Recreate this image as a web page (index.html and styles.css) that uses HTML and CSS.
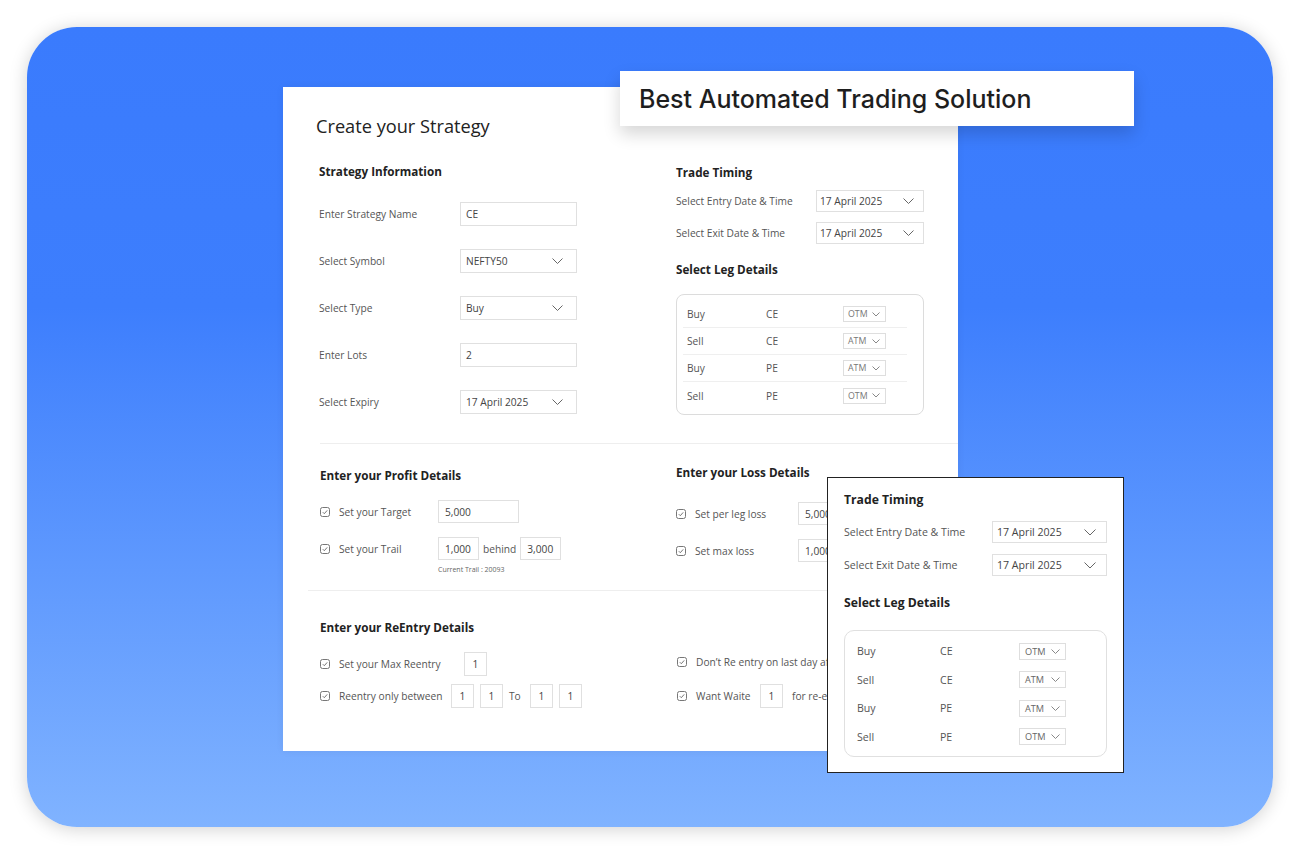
FILE: index.html
```html
<!DOCTYPE html>
<html>
<head>
<meta charset="utf-8">
<title>Create your Strategy</title>
<link rel="stylesheet" href="styles.css">
</head>
<body>
<div class="frame">
  <div class="card">
    <div class="title">Create your Strategy</div>

    <div class="top">
      <div class="col-left">
        <div class="heading">Strategy Information</div>
        <div class="frow first"><span class="flabel">Enter Strategy Name</span><span class="inp">CE</span></div>
        <div class="frow"><span class="flabel">Select Symbol</span><span class="inp sel">NEFTY50<svg class="chev" width="11" height="6" viewBox="0 0 11 6"><polyline points="0.5,0.5 5.5,5.5 10.5,0.5"/></svg></span></div>
        <div class="frow"><span class="flabel">Select Type</span><span class="inp sel">Buy<svg class="chev" width="11" height="6" viewBox="0 0 11 6"><polyline points="0.5,0.5 5.5,5.5 10.5,0.5"/></svg></span></div>
        <div class="frow"><span class="flabel">Enter Lots</span><span class="inp">2</span></div>
        <div class="frow"><span class="flabel">Select Expiry</span><span class="inp sel">17 April 2025<svg class="chev" width="11" height="6" viewBox="0 0 11 6"><polyline points="0.5,0.5 5.5,5.5 10.5,0.5"/></svg></span></div>
      </div>
      <div class="col-right">
        <div class="heading h-tt">Trade Timing</div>
        <div class="trow first"><span class="tlabel">Select Entry Date &amp; Time</span><span class="tinp">17 April 2025<svg class="chev" width="11" height="6" viewBox="0 0 11 6"><polyline points="0.5,0.5 5.5,5.5 10.5,0.5"/></svg></span></div>
        <div class="trow"><span class="tlabel">Select Exit Date &amp; Time</span><span class="tinp">17 April 2025<svg class="chev" width="11" height="6" viewBox="0 0 11 6"><polyline points="0.5,0.5 5.5,5.5 10.5,0.5"/></svg></span></div>
        <div class="heading h-leg">Select Leg Details</div>
        <div class="legbox">
          <div class="leg"><span class="c1">Buy</span><span class="c2">CE</span><span class="lsel">OTM<svg class="chev sm" width="8" height="5" viewBox="0 0 8 5"><polyline points="0.5,0.5 4,4 7.5,0.5"/></svg></span></div>
          <div class="leg"><span class="c1">Sell</span><span class="c2">CE</span><span class="lsel">ATM<svg class="chev sm" width="8" height="5" viewBox="0 0 8 5"><polyline points="0.5,0.5 4,4 7.5,0.5"/></svg></span></div>
          <div class="leg"><span class="c1">Buy</span><span class="c2">PE</span><span class="lsel">ATM<svg class="chev sm" width="8" height="5" viewBox="0 0 8 5"><polyline points="0.5,0.5 4,4 7.5,0.5"/></svg></span></div>
          <div class="leg"><span class="c1">Sell</span><span class="c2">PE</span><span class="lsel">OTM<svg class="chev sm" width="8" height="5" viewBox="0 0 8 5"><polyline points="0.5,0.5 4,4 7.5,0.5"/></svg></span></div>
        </div>
      </div>
    </div>

    <div class="divider d1"></div>

    <div class="mid">
      <div class="mcol-left">
        <div class="heading h-profit">Enter your Profit Details</div>
        <div class="crow r1"><svg class="cb" width="10" height="10" viewBox="0 0 10 10"><rect x="0.5" y="0.5" width="9" height="9" rx="2"/><polyline points="2.8,5.2 4.3,6.7 7.2,3.4"/></svg><span class="clabel w99">Set your Target</span><span class="box w81">5,000</span></div>
        <div class="crow r2"><svg class="cb" width="10" height="10" viewBox="0 0 10 10"><rect x="0.5" y="0.5" width="9" height="9" rx="2"/><polyline points="2.8,5.2 4.3,6.7 7.2,3.4"/></svg><span class="clabel w99">Set your Trail</span><span class="box w41">1,000</span><span class="behind">behind</span><span class="box w41">3,000</span></div>
        <div class="trail">Current Trail : 20093</div>
      </div>
      <div class="mcol-right">
        <div class="heading h-loss">Enter your Loss Details</div>
        <div class="crow l1"><svg class="cb" width="10" height="10" viewBox="0 0 10 10"><rect x="0.5" y="0.5" width="9" height="9" rx="2"/><polyline points="2.8,5.2 4.3,6.7 7.2,3.4"/></svg><span class="clabel w103">Set per leg loss</span><span class="box w81">5,000</span></div>
        <div class="crow l2"><svg class="cb" width="10" height="10" viewBox="0 0 10 10"><rect x="0.5" y="0.5" width="9" height="9" rx="2"/><polyline points="2.8,5.2 4.3,6.7 7.2,3.4"/></svg><span class="clabel w103">Set max loss</span><span class="box w81">1,000</span></div>
      </div>
    </div>

    <div class="divider d2"></div>

    <div class="bottom">
      <div class="bcol-left">
        <div class="heading h-re">Enter your ReEntry Details</div>
        <div class="brow b1"><svg class="cb" width="10" height="10" viewBox="0 0 10 10"><rect x="0.5" y="0.5" width="9" height="9" rx="2"/><polyline points="2.8,5.2 4.3,6.7 7.2,3.4"/></svg><span class="clabel w125">Set your Max Reentry</span><span class="box sq">1</span></div>
        <div class="brow b2"><svg class="cb" width="10" height="10" viewBox="0 0 10 10"><rect x="0.5" y="0.5" width="9" height="9" rx="2"/><polyline points="2.8,5.2 4.3,6.7 7.2,3.4"/></svg><span class="clabel w112">Reentry only between</span><span class="box sq">1</span><span class="box sq gap">1</span><span class="to">To</span><span class="box sq">1</span><span class="box sq gap">1</span></div>
      </div>
      <div class="bcol-right">
        <div class="brow rr1"><svg class="cb" width="10" height="10" viewBox="0 0 10 10"><rect x="0.5" y="0.5" width="9" height="9" rx="2"/><polyline points="2.8,5.2 4.3,6.7 7.2,3.4"/></svg><span class="clabel">Don’t Re entry on last day after</span></div>
        <div class="brow rr2"><svg class="cb" width="10" height="10" viewBox="0 0 10 10"><rect x="0.5" y="0.5" width="9" height="9" rx="2"/><polyline points="2.8,5.2 4.3,6.7 7.2,3.4"/></svg><span class="clabel w64">Want Waite</span><span class="box sq">1</span><span class="forre">for re-entry</span></div>
      </div>
    </div>
  </div>

  <div class="banner">Best Automated Trading Solution</div>

  <div class="panel">
    <div class="pheading ph1">Trade Timing</div>
    <div class="prow p1"><span class="plabel">Select Entry Date &amp; Time</span><span class="pinp">17 April 2025<svg class="chev" width="12" height="7" viewBox="0 0 12 7"><polyline points="0.5,0.5 6,6 11.5,0.5"/></svg></span></div>
    <div class="prow p2"><span class="plabel">Select Exit Date &amp; Time</span><span class="pinp">17 April 2025<svg class="chev" width="12" height="7" viewBox="0 0 12 7"><polyline points="0.5,0.5 6,6 11.5,0.5"/></svg></span></div>
    <div class="pheading ph2">Select Leg Details</div>
    <div class="plegbox">
      <div class="pleg"><span class="pc1">Buy</span><span class="pc2">CE</span><span class="psel">OTM<svg class="chev sm" width="9" height="5" viewBox="0 0 9 5"><polyline points="0.5,0.5 4.5,4.5 8.5,0.5"/></svg></span></div>
      <div class="pleg"><span class="pc1">Sell</span><span class="pc2">CE</span><span class="psel">ATM<svg class="chev sm" width="9" height="5" viewBox="0 0 9 5"><polyline points="0.5,0.5 4.5,4.5 8.5,0.5"/></svg></span></div>
      <div class="pleg"><span class="pc1">Buy</span><span class="pc2">PE</span><span class="psel">ATM<svg class="chev sm" width="9" height="5" viewBox="0 0 9 5"><polyline points="0.5,0.5 4.5,4.5 8.5,0.5"/></svg></span></div>
      <div class="pleg"><span class="pc1">Sell</span><span class="pc2">PE</span><span class="psel">OTM<svg class="chev sm" width="9" height="5" viewBox="0 0 9 5"><polyline points="0.5,0.5 4.5,4.5 8.5,0.5"/></svg></span></div>
    </div>
  </div>
</div>
</body>
</html>
```

FILE: styles.css
```css
* { box-sizing: border-box; margin: 0; padding: 0; }

body {
  margin: 0;
  width: 1300px;
  height: 854px;
  overflow: hidden;
  background: #ffffff;
  font-family: "Open Sans", "Liberation Sans", sans-serif;
  color: #333;
}

.frame {
  position: relative;
  margin: 27px 0 0 27px;
  width: 1246px;
  height: 800px;
  border-radius: 50px;
  background: linear-gradient(180deg, #3a7bfd 0%, #3d7efd 35%, #80b3ff 100%);
  box-shadow: 0 2px 18px rgba(0, 0, 0, 0.18);
  padding: 60px 0 0 256px;
}

/* main card */
.card {
  width: 675px;
  height: 664px;
  background: #fff;
  padding-top: 27px;
  box-shadow: 0 0 8px rgba(0, 0, 0, 0.06);
}

.title {
  margin-left: 33px;
  height: 24px;
  line-height: 24px;
  font-size: 18.2px;
  font-weight: 500;
  color: #222;
}

.heading {
  height: 20px;
  line-height: 20px;
  font-size: 11.7px;
  font-weight: 700;
  color: #222;
  white-space: nowrap;
}

.chev polyline {
  fill: none;
  stroke: #666;
  stroke-width: 1;
}

.cb { flex: none; }
.cb rect { fill: none; stroke: #777; stroke-width: 1; }
.cb polyline { fill: none; stroke: #666; stroke-width: 0.9; }

.top {
  display: flex;
  margin-top: 23px;
  height: 282px;
}

.col-left {
  margin-left: 36px;
  width: 357px;
}

.frow {
  display: flex;
  align-items: center;
  height: 24px;
  margin-top: 23px;
}
.frow.first { margin-top: 21px; }

.flabel {
  width: 141px;
  font-size: 10.2px;
  color: #555;
}

.inp {
  width: 117px;
  height: 24px;
  border: 1px solid #e0e0e0;
  font-size: 10.2px;
  color: #444;
  padding: 0 13px 0 5px;
  display: flex;
  align-items: center;
  justify-content: space-between;
}

.col-right { flex: 1; }
.h-tt { margin-top: 1px; }

.trow {
  display: flex;
  align-items: center;
  height: 22px;
  margin-top: 10px;
}
.trow.first { margin-top: 8px; }

.tlabel {
  width: 140px;
  font-size: 10.2px;
  color: #555;
}

.tinp {
  width: 108px;
  height: 22px;
  border: 1px solid #e0e0e0;
  font-size: 10.2px;
  color: #444;
  padding: 0 9px 0 3px;
  display: flex;
  align-items: center;
  justify-content: space-between;
}

.h-leg { margin-top: 15px; }

.legbox {
  margin-top: 15px;
  width: 248px;
  height: 121px;
  border: 1px solid #dcdcdc;
  border-radius: 8px;
  padding: 6px 16px 0 6px;
}

.leg {
  display: flex;
  align-items: center;
  height: 27px;
  padding-left: 4px;
  border-bottom: 1px solid #efefef;
  font-size: 10.2px;
  color: #555;
}
.leg:last-child { border-bottom: none; }

.c1 { width: 79px; }
.c2 { width: 77px; }

.lsel {
  width: 43px;
  height: 16px;
  border: 1px solid #dedede;
  font-size: 8.8px;
  color: #777;
  padding: 0 5px 0 4px;
  display: flex;
  align-items: center;
  justify-content: space-between;
}
.chev.sm polyline { stroke: #888; }

.divider {
  height: 1px;
  background: #eeeeee;
}
.d1 { margin-left: 37px; }
.d2 { margin-left: 25px; }

/* profit / loss */
.mid {
  display: flex;
  height: 146px;
}

.mcol-left {
  margin-left: 37px;
  width: 356px;
}

.h-profit { margin-top: 21px; }

.crow {
  display: flex;
  align-items: center;
  height: 23px;
}
.crow.r1 { margin-top: 15px; }
.crow.r2 { margin-top: 14px; }

.clabel {
  margin-left: 9px;
  font-size: 10.2px;
  color: #555;
  white-space: nowrap;
}
.w99 { width: 99px; }
.w103 { width: 103px; }
.w125 { width: 125px; }
.w112 { width: 112px; }
.w64 { width: 64px; }

.box {
  height: 23px;
  border: 1px solid #e0e0e0;
  font-size: 10.2px;
  color: #444;
  display: flex;
  align-items: center;
  padding-left: 6px;
  flex: none;
}
.w81 { width: 81px; }
.w41 { width: 41px; }

.behind {
  margin: 0 4px;
  font-size: 10.2px;
  color: #555;
}

.trail {
  margin: 5px 0 0 118px;
  height: 10px;
  line-height: 10px;
  font-size: 7px;
  color: #666;
}

.mcol-right { flex: 1; }
.h-loss { margin-top: 18px; }
.crow.l1 { margin-top: 20px; }
.crow.l2 { margin-top: 14px; }

/* reentry */
.bottom {
  display: flex;
}

.bcol-left {
  margin-left: 37px;
  width: 357px;
}

.h-re { margin-top: 26px; }

.brow {
  display: flex;
  align-items: center;
  height: 24px;
}
.brow.b1 { margin-top: 15px; }
.brow.b2 { margin-top: 8px; }

.box.sq {
  width: 23px;
  height: 24px;
  padding: 0;
  justify-content: center;
}
.box.sq.gap { margin-left: 6px; }

.to {
  margin: 0 6px;
  width: 15px;
  font-size: 10.2px;
  color: #555;
}

.bcol-right { flex: 1; }
.brow.rr1 { margin-top: 59px; }
.brow.rr2 { margin-top: 10px; }

.forre {
  margin-left: 9px;
  font-size: 10.2px;
  color: #555;
  white-space: nowrap;
}

/* banner */
.banner {
  position: absolute;
  left: 593px;
  top: 44px;
  width: 514px;
  height: 55px;
  background: #fff;
  box-shadow: 0 8px 16px rgba(0, 0, 0, 0.16);
  padding-left: 19px;
  display: flex;
  align-items: center;
  font-family: "Inter", "Open Sans", sans-serif;
  font-size: 25px;
  font-weight: 500;
  color: #1e1e1e;
  white-space: nowrap;
}

/* floating panel */
.panel {
  position: absolute;
  left: 800px;
  top: 450px;
  width: 297px;
  height: 296px;
  background: #fff;
  border: 1px solid #222;
  padding-left: 16px;
  overflow: hidden;
}

.pheading {
  height: 20px;
  line-height: 20px;
  font-size: 12.2px;
  font-weight: 700;
  color: #222;
}
.ph1 { margin-top: 12px; }
.ph2 { margin-top: 17px; }

.prow {
  display: flex;
  align-items: center;
  height: 22px;
  margin-top: 11px;
}

.plabel {
  width: 148px;
  font-size: 10.6px;
  color: #555;
  white-space: nowrap;
}

.pinp {
  width: 115px;
  height: 22px;
  border: 1px solid #e0e0e0;
  font-size: 10.6px;
  color: #444;
  padding: 0 10px 0 4px;
  display: flex;
  align-items: center;
  justify-content: space-between;
}

.plegbox {
  margin-top: 17px;
  width: 263px;
  height: 127px;
  border: 1px solid #e0e0e0;
  border-radius: 10px;
  padding-top: 6px;
}

.pleg {
  display: flex;
  align-items: center;
  height: 28.5px;
  padding-left: 12px;
  font-size: 10.6px;
  color: #555;
}

.pc1 { width: 83px; }
.pc2 { width: 79px; }

.psel {
  width: 47px;
  height: 17px;
  border: 1px solid #dedede;
  font-size: 9.2px;
  color: #666;
  padding: 0 5px 0 5px;
  display: flex;
  align-items: center;
  justify-content: space-between;
}
```
